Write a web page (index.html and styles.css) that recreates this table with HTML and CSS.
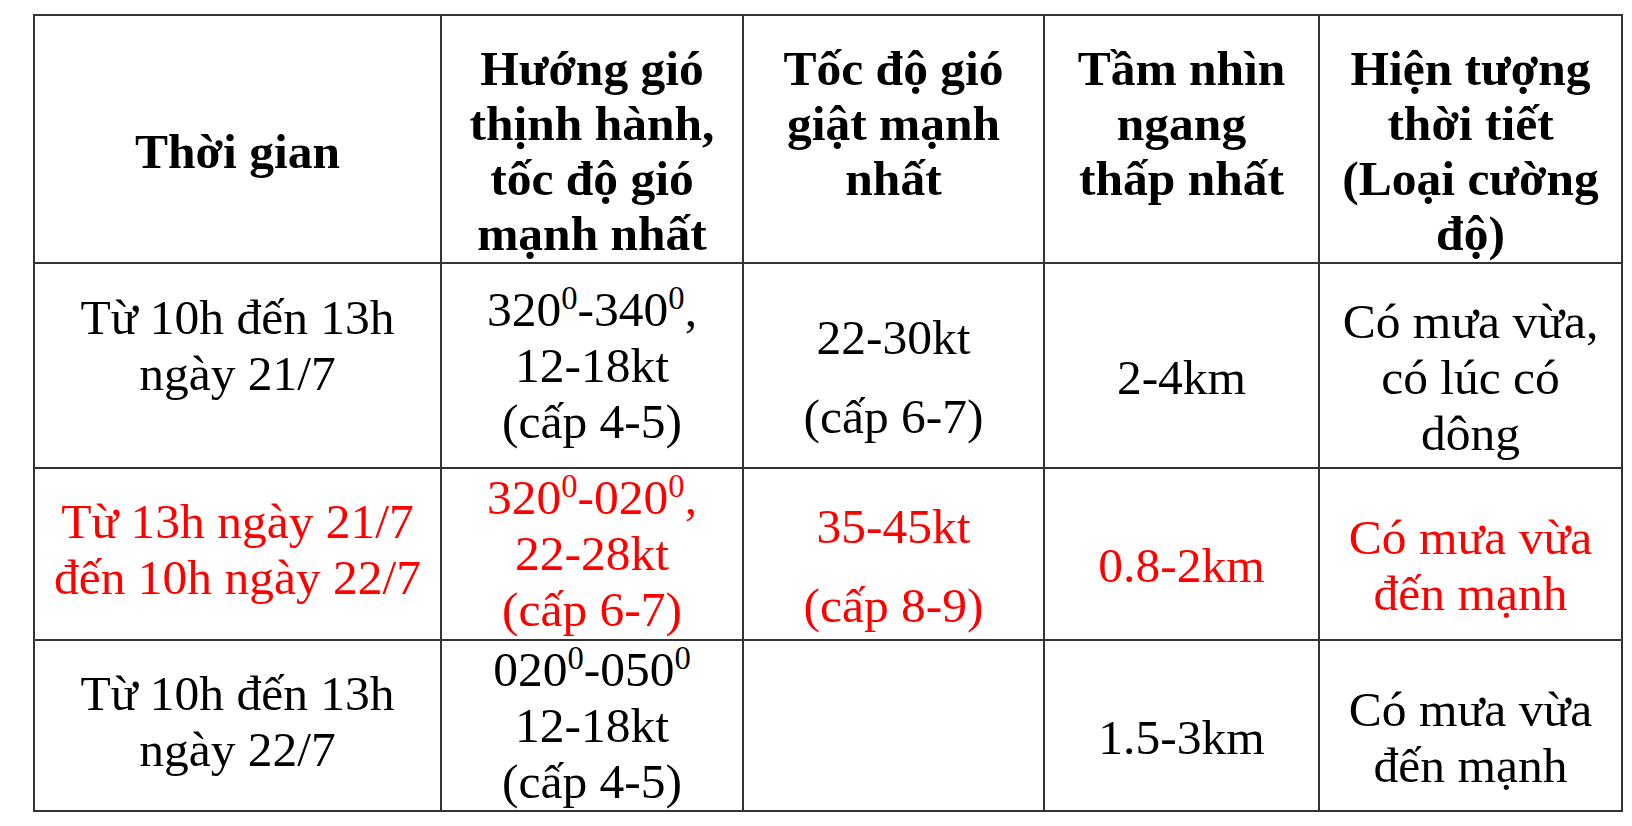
FILE: index.html
```html
<!DOCTYPE html>
<html lang="vi">
<head>
<meta charset="utf-8">
<title>Dự báo thời tiết</title>
<link rel="stylesheet" href="styles.css">
</head>
<body>
<table class="wx">
  <colgroup>
    <col class="c1"><col class="c2"><col class="c3"><col class="c4"><col class="c5">
  </colgroup>
  <tr class="head">
    <th class="mid">Thời gian</th>
    <th>Hướng gió<br>thịnh hành,<br>tốc độ gió<br>mạnh nhất</th>
    <th>Tốc độ gió<br>giật mạnh<br>nhất</th>
    <th>Tầm nhìn<br>ngang<br>thấp nhất</th>
    <th>Hiện tượng<br>thời tiết<br>(Loại cường<br>độ)</th>
  </tr>
  <tr class="r1">
    <td class="time first">Từ 10h đến 13h<br>ngày 21/7</td>
    <td class="wind">320<sup>0</sup>-340<sup>0</sup>,<br>12-18kt<br>(cấp 4-5)</td>
    <td class="off"><p>22-30kt</p><p>(cấp 6-7)</p></td>
    <td class="off">2-4km</td>
    <td class="off">Có mưa vừa,<br>có lúc có<br>dông</td>
  </tr>
  <tr class="r2 alert">
    <td class="time">Từ 13h ngày 21/7<br>đến 10h ngày 22/7</td>
    <td class="wind">320<sup>0</sup>-020<sup>0</sup>,<br>22-28kt<br>(cấp 6-7)</td>
    <td class="off"><p>35-45kt</p><p>(cấp 8-9)</p></td>
    <td class="off">0.8-2km</td>
    <td class="off">Có mưa vừa<br>đến mạnh</td>
  </tr>
  <tr class="r3">
    <td class="time">Từ 10h đến 13h<br>ngày 22/7</td>
    <td class="wind">020<sup>0</sup>-050<sup>0</sup><br>12-18kt<br>(cấp 4-5)</td>
    <td class="off"></td>
    <td class="off">1.5-3km</td>
    <td class="off">Có mưa vừa<br>đến mạnh</td>
  </tr>
</table>
</body>
</html>
```

FILE: styles.css
```css
html, body {
  margin: 0;
  padding: 0;
  background: #ffffff;
}

body {
  padding: 14px 0 0 33px;
  font-family: "Liberation Serif", "Times New Roman", serif;
  color: #000000;
}

.wx {
  border-collapse: separate;
  border-spacing: 0;
  table-layout: fixed;
  width: 1588px;
  border-top: 2px solid #333333;
  border-left: 2px solid #333333;
  font-size: 49.5px;
}

.c1 { width: 407px; }
.c2 { width: 302px; }
.c3 { width: 301px; }
.c4 { width: 275px; }
.c5 { width: 303px; }

.wx th,
.wx td {
  box-sizing: border-box;
  border-right: 2px solid #333333;
  border-bottom: 2px solid #333333;
  padding: 0 2px;
  text-align: center;
  white-space: nowrap;
}

.wx th {
  font-weight: bold;
  line-height: 55px;
  vertical-align: top;
  padding-top: 25px;
  height: 248px;
}

.wx th.mid {
  vertical-align: middle;
}

.wx td {
  font-weight: normal;
  line-height: 56px;
  vertical-align: middle;
}

.r1 td { height: 205px; }
.r2 td { height: 172px; }
.r3 td { height: 171px; }

.wx td.time {
  padding-bottom: 8px;
}

.wx td.time.first {
  vertical-align: top;
  padding-top: 26px;
  padding-bottom: 0;
}

.wx td.off {
  padding-top: 24px;
}

.wx td p {
  margin: 0;
}

.wx td p + p {
  margin-top: 23px;
}

.wx sup {
  font-size: 0.66em;
  line-height: 0;
  vertical-align: super;
}

.alert td {
  color: #ff0000;
}
```
